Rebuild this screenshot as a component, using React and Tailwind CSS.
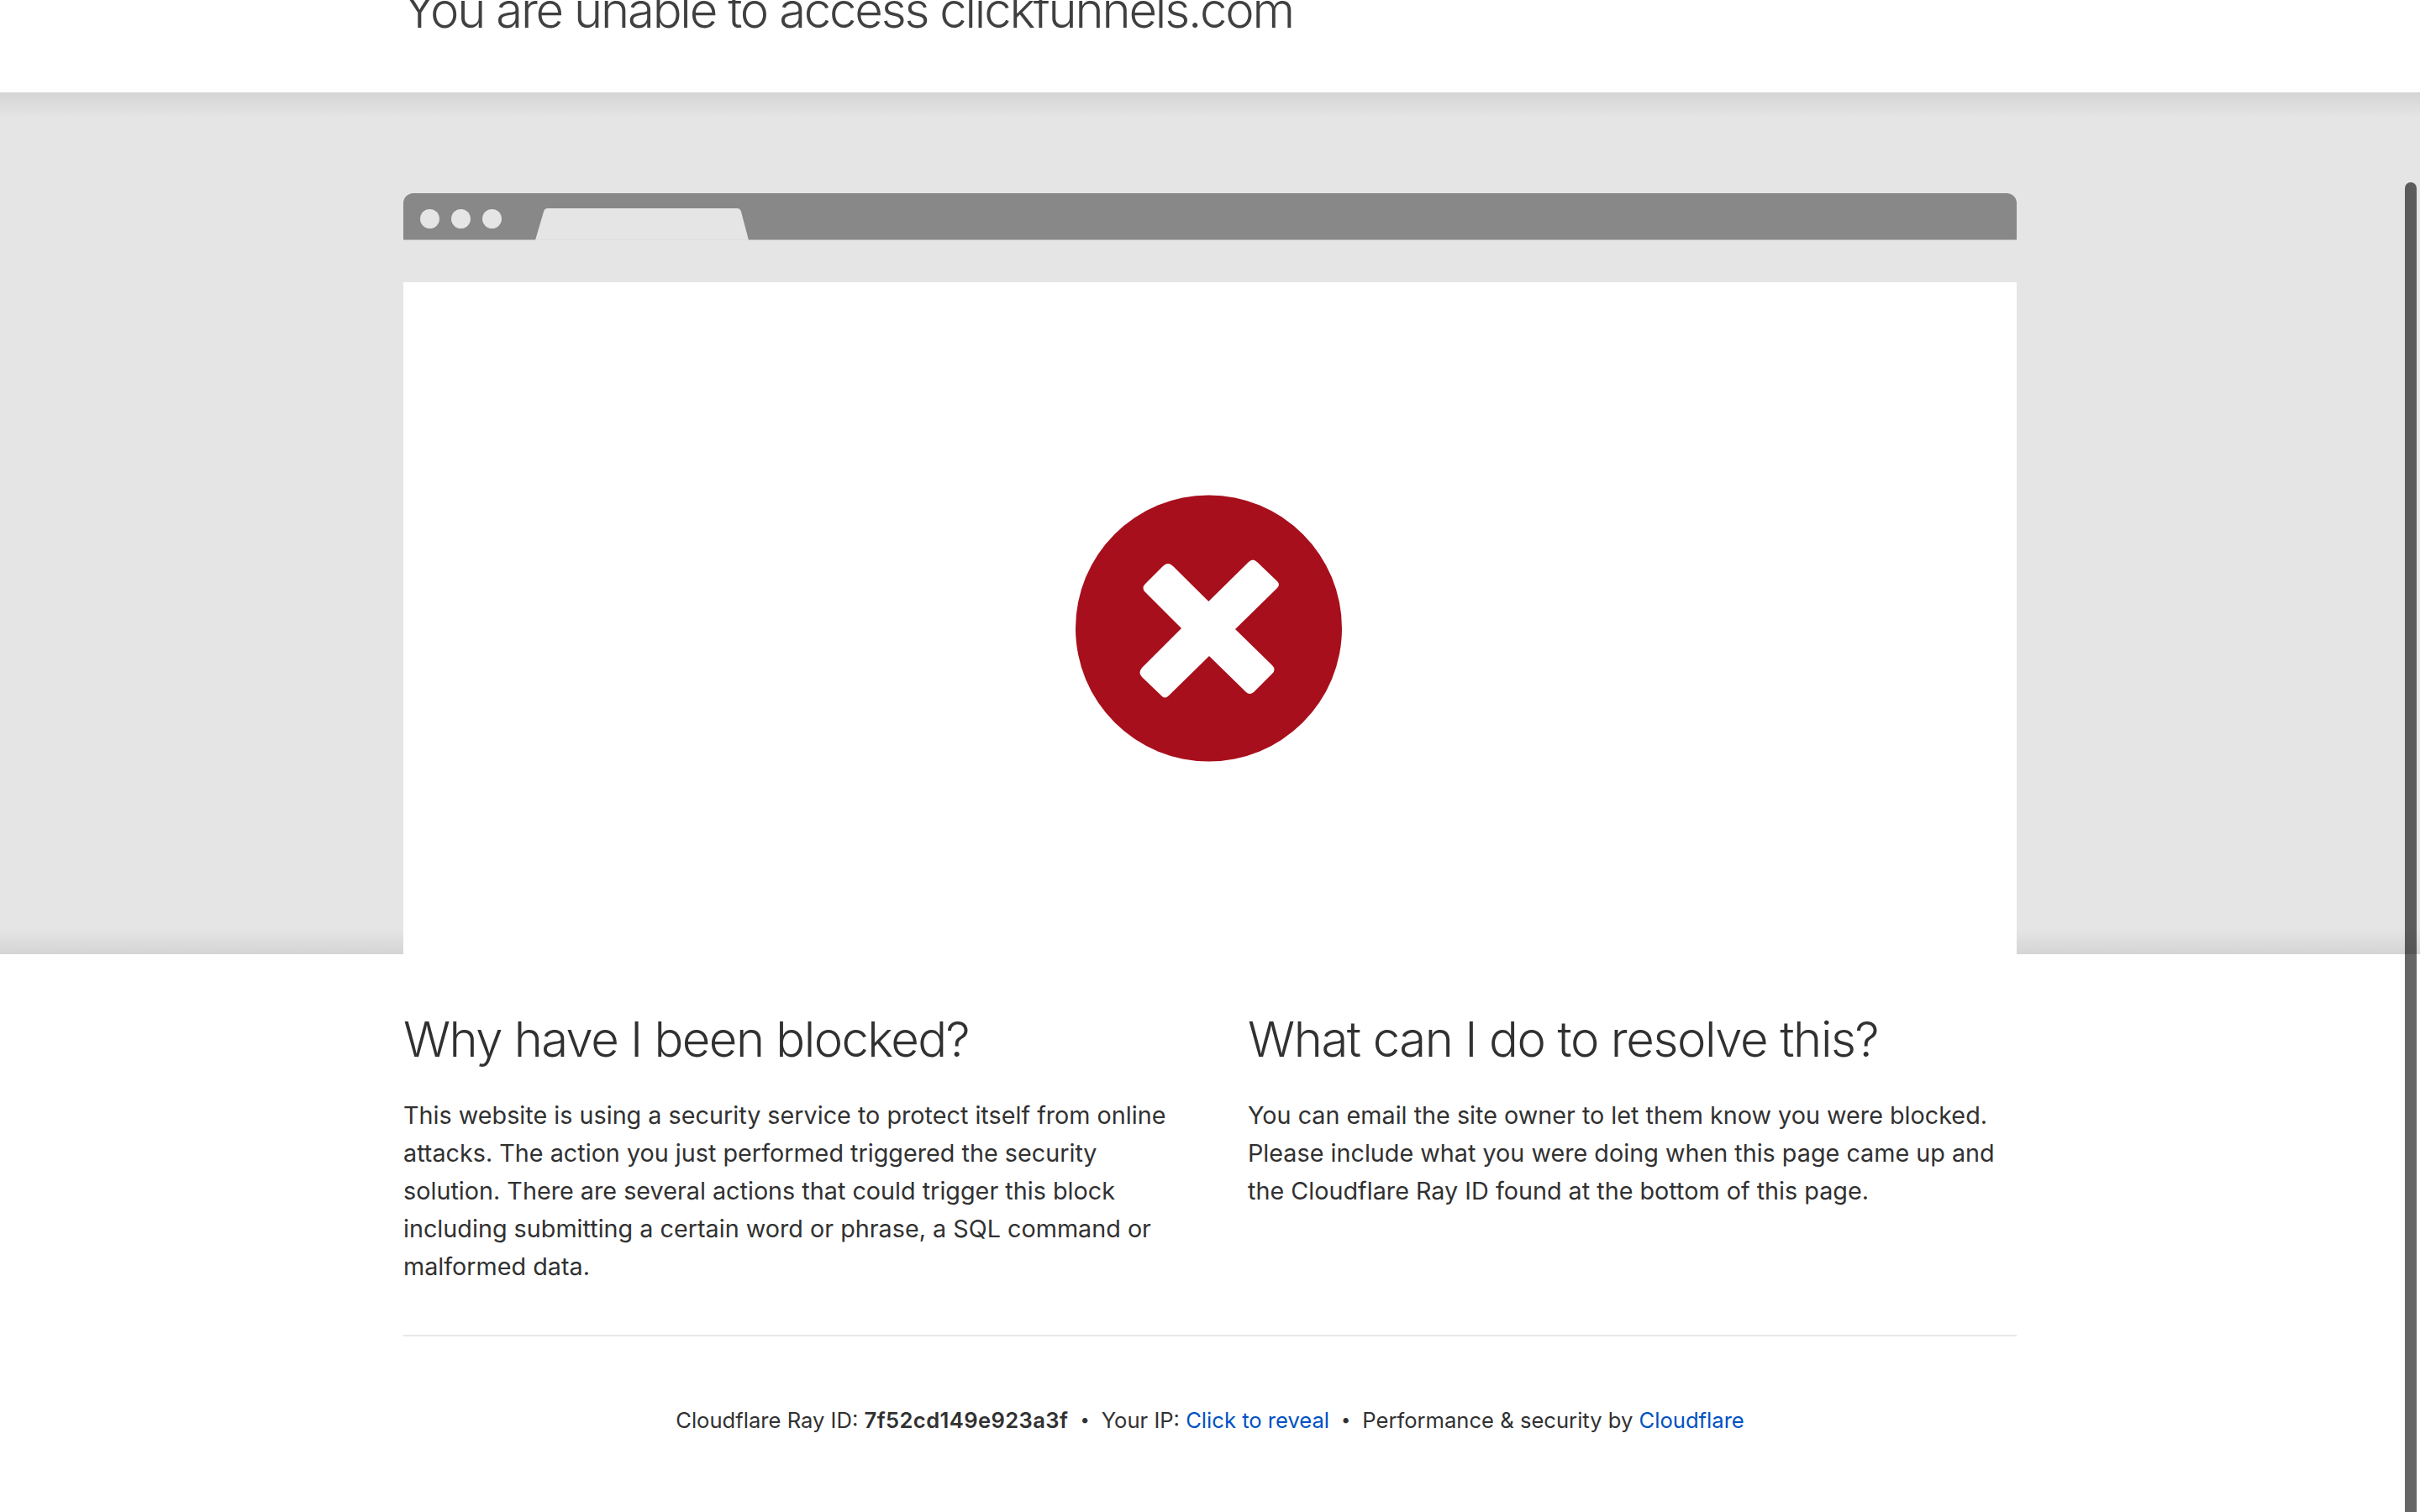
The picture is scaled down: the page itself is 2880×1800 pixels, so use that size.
import React from "react";

const fontStack = "font-['Inter','Noto_Sans',sans-serif]";

function BlockedIcon() {
  return (
    <svg viewBox="0 0 400 350" className="h-[350px] w-[400px]" aria-hidden="true">
      <circle cx="198.5" cy="178" r="158.5" fill="#a80f1c" />
      <path
        d="M198.3 146 L156 104 Q150 98 144 104 L123 125 Q118 130 123 135 L166 178 L119 225 Q114 231 119 236 L142 258 Q146 263 151 258 L199 211 L243 254 Q247 258 252 254 L274 232 Q279 227 274 222 L230 179 L280 130 Q284 126 280 122 L256 99 Q251 94 246 99 Z"
        fill="#fff"
      />
    </svg>
  );
}

function BrowserBar() {
  return (
    <div className="relative flex h-[56px] items-center gap-[14px] rounded-t-[12px] border-b border-[#b5b5b5] bg-[#888888] pt-[5px] pl-[20px]">
      <span className="size-[23px] rounded-full bg-[#e5e5e5]" />
      <span className="size-[23px] rounded-full bg-[#e5e5e5]" />
      <span className="size-[23px] rounded-full bg-[#e5e5e5]" />
      {/* tab sits on the bottom edge of the bar and covers its border */}
      <svg viewBox="0 0 256 38" className="absolute -bottom-px left-[157px] h-[38px] w-[256px]" aria-hidden="true">
        <path d="M0 38 L10 4 Q11 0 15 0 L240 0 Q244 0 245 4 L254 38 Z" fill="#e5e5e5" />
        <rect x="1" y="37" width="253" height="1" fill="#dcdcdc" />
      </svg>
    </div>
  );
}

export default function App() {
  return (
    <div className={`relative h-[1800px] overflow-hidden bg-white text-[#313131] ${fontStack}`}>
      {/* page is scrolled, the headline is cut off by the top edge */}
      <header className="h-[110px] overflow-hidden">
        <h2 className="mx-auto -mt-[25px] w-[1920px] text-[58px] leading-[75px] font-light tracking-[-2.2px] text-[#404040]">
          You are unable to access clickfunnels.com
        </h2>
      </header>

      <section className="h-[1026px] bg-[linear-gradient(to_bottom,#d4d4d4_0px,#e5e5e5_30px,#e5e5e5_996px,#d4d4d4_1026px)] pt-[120px]">
        <div className="mx-auto w-[1920px]">
          <BrowserBar />
          <div className="mt-[50px] flex h-[800px] items-center justify-center bg-white pt-[18px]">
            <BlockedIcon />
          </div>
        </div>
      </section>

      <main className="mx-auto w-[1920px]">
        <div className="grid grid-cols-2 gap-x-[90px] border-b-2 border-[#e8e8e8] pt-[64px] pb-[59px]">
          <div>
            <h2 className="text-[58px] leading-[75px] font-light tracking-[-1.55px]">Why have I been blocked?</h2>
            <p className="mt-[30px] text-[28.75px] leading-[45px]">
              This website is using a security service to protect itself from online attacks. The action you just
              performed triggered the security solution. There are several actions that could trigger this block
              including submitting a certain word or phrase, a SQL command or malformed data.
            </p>
          </div>
          <div>
            <h2 className="text-[58px] leading-[75px] font-light tracking-[-1.4px]">What can I do to resolve this?</h2>
            <p className="mt-[30px] text-[28.75px] leading-[45px]">
              You can email the site owner to let them know you were blocked. Please include what you were doing when
              this page came up and the Cloudflare Ray ID found at the bottom of this page.
            </p>
          </div>
        </div>

        <footer className="flex justify-center gap-[14px] pt-[80px] text-[25.6px] leading-[39px]">
          <span>
            Cloudflare Ray ID: <strong className="font-semibold tracking-[0.4px]">7f52cd149e923a3f</strong>
          </span>
          <span className="text-[20px]">•</span>
          <span>
            Your IP: <a className="text-[#0051c3]">Click to reveal</a>
          </span>
          <span className="text-[20px]">•</span>
          <span>
            Performance &amp; security by <a className="text-[#0051c3]">Cloudflare</a>
          </span>
        </footer>
      </main>

      {/* overlay scrollbar thumb */}
      <div className="absolute top-[217px] right-[4px] bottom-0 w-[14px] rounded-t-full bg-black/60" />
    </div>
  );
}
